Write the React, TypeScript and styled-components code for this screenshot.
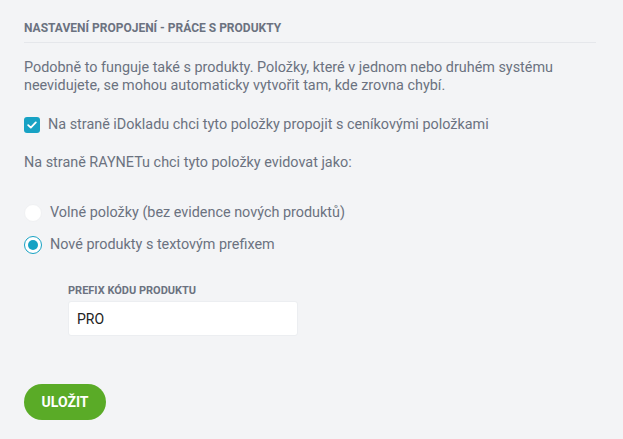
import React from "react";
import styled, { createGlobalStyle } from "styled-components";

const GlobalStyle = createGlobalStyle`
  html, body {
    margin: 0;
    padding: 0;
    background: #f3f4f6;
    font-family: Roboto, "Liberation Sans", sans-serif;
  }
`;

const Page = styled.div`
  padding: 21px 27px 0 24px;
  width: 572px;
`;

const SectionTitle = styled.h2`
  margin: 0;
  padding-bottom: 7px;
  font-size: 12px;
  font-weight: 700;
  color: #6b7280;
  border-bottom: 1px solid #e5e7eb;
  letter-spacing: 0;
`;

const Paragraph = styled.p<{ $top?: number }>`
  margin: ${(p) => p.$top ?? 16}px 0 0;
  font-size: 14.4px;
  line-height: 18px;
  color: #6b7280;
`;

const OptionRow = styled.label<{ $top: number }>`
  display: flex;
  align-items: center;
  gap: 8px;
  margin-top: ${(p) => p.$top}px;
  font-size: 14.4px;
  line-height: 18px;
  color: #6b7280;
`;

const CheckBox = styled.span`
  width: 16px;
  height: 16px;
  border-radius: 3px;
  background: #17a2c4;
  display: flex;
  align-items: center;
  justify-content: center;
  flex-shrink: 0;
`;

const Radio = styled.span<{ $checked?: boolean }>`
  width: 18px;
  height: 18px;
  border-radius: 50%;
  box-sizing: border-box;
  background: #fff;
  border: ${(p) => (p.$checked ? "1.5px solid #17a2c4" : "1px solid #f0f1f3")};
  display: flex;
  align-items: center;
  justify-content: center;
  flex-shrink: 0;

  &::after {
    content: "";
    display: ${(p) => (p.$checked ? "block" : "none")};
    width: 10px;
    height: 10px;
    border-radius: 50%;
    background: #17a2c4;
  }
`;

const PrefixField = styled.div`
  margin: 30px 0 0 44px;
  display: flex;
  flex-direction: column;
  gap: 4px;
`;

const FieldLabel = styled.span`
  font-size: 11px;
  font-weight: 700;
  color: #6b7280;
`;

const TextInput = styled.input`
  width: 230px;
  height: 35px;
  box-sizing: border-box;
  border: 1px solid #eceef1;
  border-radius: 3px;
  background: #fff;
  padding: 0 8px;
  font-family: Roboto, "Liberation Sans", sans-serif;
  font-size: 14px;
  color: #222;
  outline: none;
`;

const SaveButton = styled.button`
  margin-top: 48px;
  width: 82px;
  height: 36px;
  border: none;
  border-radius: 18px;
  background: #5aab27;
  color: #fff;
  font-family: Roboto, "Liberation Sans", sans-serif;
  font-size: 14px;
  font-weight: 700;
  cursor: pointer;
`;

export default function App() {
  return (
    <>
      <GlobalStyle />
      <Page>
        <SectionTitle>NASTAVENÍ PROPOJENÍ - PRÁCE S PRODUKTY</SectionTitle>
        <Paragraph>
          Podobně to funguje také s produkty. Položky, které v jednom nebo druhém systému
          neevidujete, se mohou automaticky vytvořit tam, kde zrovna chybí.
        </Paragraph>
        <OptionRow $top={21}>
          <CheckBox>
            <svg width="10" height="8" viewBox="0 0 10 8">
              <path d="M1.2 4.2 L3.8 6.6 L8.8 1.4" fill="none" stroke="#fff" strokeWidth="1.8" strokeLinecap="round" strokeLinejoin="round" />
            </svg>
          </CheckBox>
          Na straně iDokladu chci tyto položky propojit s ceníkovými položkami
        </OptionRow>
        <Paragraph $top={20}>Na straně RAYNETu chci tyto položky evidovat jako:</Paragraph>
        <OptionRow $top={32}>
          <Radio />
          Volné položky (bez evidence nových produktů)
        </OptionRow>
        <OptionRow $top={14}>
          <Radio $checked />
          Nové produkty s textovým prefixem
        </OptionRow>
        <PrefixField>
          <FieldLabel>PREFIX KÓDU PRODUKTU</FieldLabel>
          <TextInput defaultValue="PRO" />
        </PrefixField>
        <SaveButton>ULOŽIT</SaveButton>
      </Page>
    </>
  );
}
